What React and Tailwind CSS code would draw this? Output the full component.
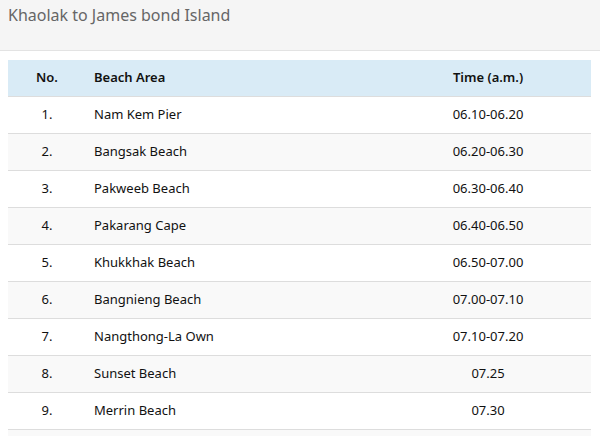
const rows = [
  ['1.', 'Nam Kem Pier', '06.10-06.20'],
  ['2.', 'Bangsak Beach', '06.20-06.30'],
  ['3.', 'Pakweeb Beach', '06.30-06.40'],
  ['4.', 'Pakarang Cape', '06.40-06.50'],
  ['5.', 'Khukkhak Beach', '06.50-07.00'],
  ['6.', 'Bangnieng Beach', '07.00-07.10'],
  ['7.', 'Nangthong-La Own', '07.10-07.20'],
  ['8.', 'Sunset Beach', '07.25'],
  ['9.', 'Merrin Beach', '07.30'],
];

export default function App() {
  return (
    <div className="h-[436px] overflow-hidden bg-white font-['Noto_Sans',sans-serif]">
      <header className="h-[51px] bg-[#f5f5f5] border-b border-[#e3e3e3] px-2 pt-[3px]">
        <h1 className="text-[16px] leading-[24px] text-[#666]">Khaolak to James bond Island</h1>
      </header>
      <div className="px-2 pt-[9px]">
        <table className="w-[583px] border-collapse text-[13px] text-[#111]">
          <thead>
            <tr className="h-[36px] bg-[#d9ebf6]">
              <th className="w-[78px] text-center font-semibold">No.</th>
              <th className="w-[299px] text-left pl-2 font-semibold">Beach Area</th>
              <th className="text-center font-semibold">Time (a.m.)</th>
            </tr>
          </thead>
          <tbody>
            {rows.map(([no, area, time], i) => (
              <tr key={no} className={`h-[37px] border-t border-[#dddddd] ${i % 2 ? 'bg-[#f9f9f9]' : 'bg-white'}`}>
                <td className="text-center">{no}</td>
                <td className="pl-2">{area}</td>
                <td className="text-center">{time}</td>
              </tr>
            ))}
            <tr className="h-[37px] border-t border-[#dddddd] bg-[#f9f9f9]">
              <td></td><td></td><td></td>
            </tr>
          </tbody>
        </table>
      </div>
    </div>
  );
}
